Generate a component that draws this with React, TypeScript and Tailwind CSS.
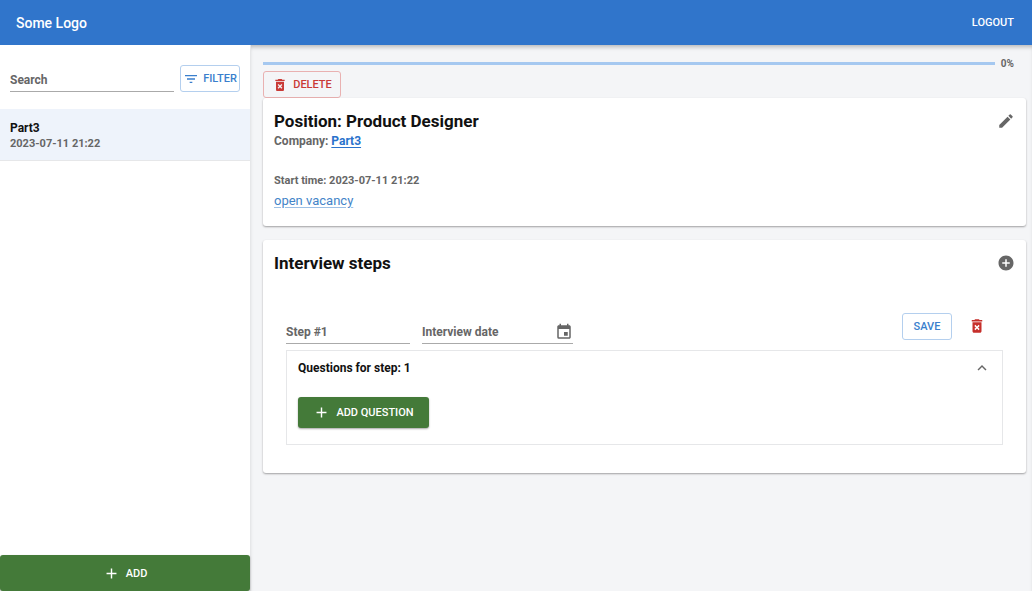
import { cva } from 'class-variance-authority'
import { clsx } from 'clsx'
import type { ButtonHTMLAttributes, InputHTMLAttributes, ReactNode } from 'react'
import {
  MdAdd,
  MdAddCircle,
  MdDeleteForever,
  MdEdit,
  MdEvent,
  MdExpandLess,
  MdFilterList,
} from 'react-icons/md'

const button = cva(
  'flex items-center justify-center rounded-[3px] text-[11px] leading-[17px] font-medium uppercase',
  {
    variants: {
      variant: {
        primary: 'border border-[#b4cfee] text-[#3a7fcd]',
        danger: 'border border-[#e9b1b1] text-[#c93a36]',
        success:
          'bg-[#447a39] text-white shadow-[0_1px_2px_rgba(0,0,0,0.35)]',
      },
    },
  }
)

interface ButtonProps extends ButtonHTMLAttributes<HTMLButtonElement> {
  variant: 'primary' | 'danger' | 'success'
}

function Button({ variant, className, ...props }: ButtonProps) {
  return (
    <button
      type="button"
      className={clsx(button({ variant }), className)}
      {...props}
    />
  )
}

function TextField({
  label,
  className,
  children,
  ...props
}: InputHTMLAttributes<HTMLInputElement> & { label: string }) {
  return (
    <div className={clsx('flex h-6 items-center border-b border-[#aaaaaa]', className)}>
      <input
        type="text"
        aria-label={label}
        placeholder={label}
        className="w-full min-w-0 bg-transparent text-xs font-bold text-[#222222] outline-none placeholder:text-[#666666]"
        {...props}
      />
      {children}
    </div>
  )
}

function Card({ children, className }: { children: ReactNode; className?: string }) {
  return (
    <section
      className={clsx(
        'rounded-[3px] bg-white px-[11px] pt-[11px] shadow-[0_1px_2px_rgba(0,0,0,0.35)]',
        className
      )}
    >
      {children}
    </section>
  )
}

function Sidebar() {
  return (
    <aside className="flex w-[251px] shrink-0 flex-col border-r border-[#e6e7e9] bg-white">
      <div className="flex gap-[6px] px-[10px] pt-5 pb-[17px]">
        <TextField label="Search" type="search" className="mt-[3px] flex-1" />
        <Button variant="primary" className="h-[27px] w-[60px] gap-1">
          <MdFilterList size={16} />
          Filter
        </Button>
      </div>

      <ul>
        <li className="border-b border-[#e6e7e9] bg-[#eef3fb]">
          <a href="#part3" className="block px-[10px] pt-[11px] pb-2">
            <span className="block text-xs leading-4 font-bold text-[#111111]">Part3</span>
            <span className="block text-[11px] leading-4 font-bold text-[#666666]">
              2023-07-11 21:22
            </span>
          </a>
        </li>
      </ul>

      <Button variant="success" className="mt-auto h-9 w-full gap-[6px]">
        <MdAdd size={17} />
        Add
      </Button>
    </aside>
  )
}

function PositionCard() {
  return (
    <Card className="flex items-start justify-between pb-[17px]">
      <div className="font-bold text-[#666666]">
        <h1 className="text-[17px] leading-6 text-[#111111]">Position: Product Designer</h1>
        <p className="text-xs leading-4">
          Company:{' '}
          <a href="#company" className="text-[#2a72cc] underline underline-offset-2">
            Part3
          </a>
        </p>
        <p className="mt-6 text-[11px] leading-4">Start time: 2023-07-11 21:22</p>
        <a
          href="#vacancy"
          className="mt-1 block text-[13px] leading-4 font-normal text-[#4384c8] underline decoration-[#9dc0e6] underline-offset-2"
        >
          open vacancy
        </a>
      </div>
      <button type="button" aria-label="Edit position" className="py-[3px] text-[#666666]">
        <MdEdit size={18} />
      </button>
    </Card>
  )
}

function InterviewSteps() {
  return (
    <Card className="mt-[14px] pb-7">
      <div className="flex items-center justify-between">
        <h2 className="text-[17px] leading-6 font-bold text-[#111111]">Interview steps</h2>
        <button type="button" aria-label="Add step" className="text-[#666666]">
          <MdAddCircle size={18} />
        </button>
      </div>

      <div className="mx-3 mt-[33px]">
        {/* Step form */}
        <div className="flex h-9 items-end gap-3">
          <TextField label="Step #1" className="w-[124px]" />
          <TextField label="Interview date" className="w-[151px]">
            <button type="button" aria-label="Choose date" className="text-[#666666]">
              <MdEvent size={18} />
            </button>
          </TextField>
          <Button variant="primary" className="mb-1 ml-auto h-[27px] w-[50px]">
            Save
          </Button>
          <button
            type="button"
            aria-label="Delete step"
            className="mr-[17px] mb-[9px] ml-1 text-[#c62f2b]"
          >
            <MdDeleteForever size={18} />
          </button>
        </div>

        {/* Questions */}
        <div className="mt-[6px] border border-[#e6e7e9] px-[11px] pt-2 pb-4">
          <button
            type="button"
            aria-expanded="true"
            className="flex w-full items-center justify-between text-xs leading-[18px] font-bold text-[#111111]"
          >
            Questions for step: 1
            <MdExpandLess size={18} className="text-[#666666]" />
          </button>
          <Button variant="success" className="mt-5 h-[31px] w-[131px] gap-[6px]">
            <MdAdd size={17} />
            Add question
          </Button>
        </div>
      </div>
    </Card>
  )
}

export default function App() {
  return (
    <div className="flex min-h-screen flex-col bg-[#f4f5f7] font-['Roboto',sans-serif]">
      <header className="flex h-[45px] items-center justify-between bg-[#3075cb] px-4 text-white">
        <span className="text-sm font-medium">Some Logo</span>
        <button type="button" className="px-[2px] text-[11px] leading-[17px] font-medium uppercase">
          Logout
        </button>
      </header>

      <div className="flex flex-1">
        <Sidebar />
        <main className="min-w-0 flex-1 pt-[11px] pr-[6px] pb-6 pl-3 shadow-[inset_0_4px_4px_-2px_rgba(0,0,0,0.25)]">
          <div className="flex items-center gap-[6px] pr-3">
            <div
              role="progressbar"
              aria-label="Interview progress"
              aria-valuenow={0}
              className="h-[3px] flex-1 bg-[#a5c8f0]"
            />
            <span className="text-[10px] leading-[15px] font-bold text-[#666666]">0%</span>
          </div>
          <Button variant="danger" className="h-[27px] w-[78px] gap-[5px]">
            <MdDeleteForever size={16} />
            Delete
          </Button>
          <PositionCard />
          <InterviewSteps />
        </main>
      </div>
    </div>
  )
}
